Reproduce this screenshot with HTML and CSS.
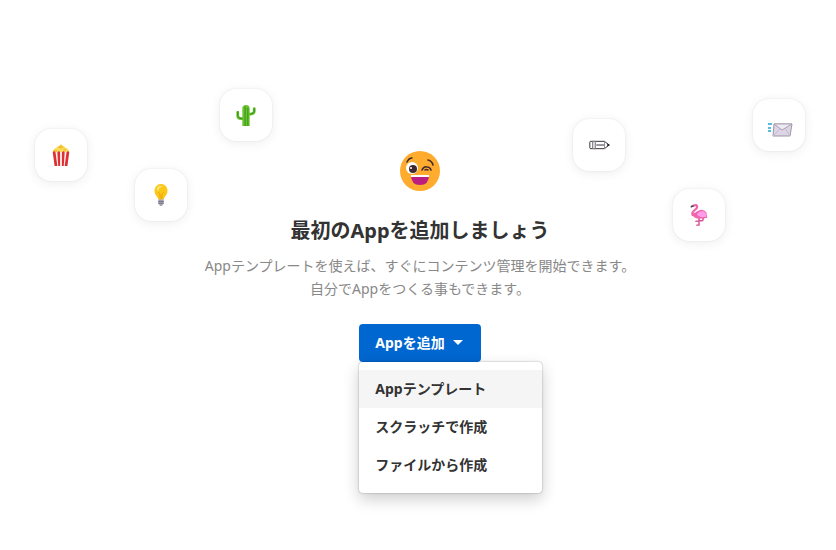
FILE: index.html
```
<!DOCTYPE html>
<html lang="ja">
<head>
    <meta charset="UTF-8">
    <meta name="viewport" content="width=device-width, initial-scale=1.0">
    <title>Appを追加</title>
    <link rel="stylesheet" href="styles.css">
</head>
<body>
    <main class="welcome">
        <div class="tiles" aria-hidden="true">
            <div class="tile tile-popcorn">
                <svg viewBox="0 0 24 24">
                    <path fill="#f9dc5c" d="M3 9c0-2 1-4 4-5q2-2 3-2 2-3 4 0 1 0 3 2c3 1 4 3 4 5z"/>
                    <path fill="#f5bd35" d="M8 4l4-3 3 3-3 1zM14 5l4 1-2 2zM5 6l3 1-1 2H4z"/>
                    <path fill="#fff0ed" d="M4 9h16l-2 14H6z"/>
                    <path fill="#dd3034" d="M3 9q1-2 3 0l2 15H5zM8 9q2-2 3 0v15H9zM13 9q2-2 3 0l-1 15h-2zM18 9q2-2 3 0l-2 15h-3z"/>
                </svg>
            </div>
            <div class="tile tile-bulb">
                <svg viewBox="0 0 24 24">
                    <path fill="#fbc719" d="M12 0a7 7 0 0 0-7 8c0 4 3 5 4 9h6c1-4 4-5 4-9a7 7 0 0 0-7-8z"/>
                    <path fill="#ffe36b" d="M8 3q3-2 6 0-4 0-5 5-3-2-1-5z"/>
                    <path fill="none" stroke="#eaa00f" d="M9 9l2 2v6m4-8l-2 2v6"/>
                    <path fill="#a6a5b5" d="M9 17h6v4l-2 3h-2l-2-3z"/>
                    <path stroke="#737285" d="M9 19h6m-6 2h6"/>
                </svg>
            </div>
            <div class="tile tile-cactus">
                <svg viewBox="0 0 24 24">
                    <path fill="none" stroke="#62bd26" stroke-width="3" stroke-linecap="round" d="M3 9v4q0 3 4 3h4M21 5v3q0 3-4 3h-3"/>
                    <path fill="#6ac42b" d="M8 24V5q0-4 4-4t4 4v19z"/>
                    <path stroke="#318b20" d="M11 3v21m3-20v20"/>
                    <path fill="none" stroke="#318b20" d="M3 8v5q1 3 5 3m13-11v3q-1 2-4 3"/>
                </svg>
            </div>
            <div class="tile tile-pencil">
                <svg viewBox="0 0 24 24">
                    <path fill="#fff" stroke="#27232a" d="M3 8h15l5 4-5 4H3q-1 0-1-1V9q0-1 1-1z"/>
                    <path fill="#e4e2e4" stroke="#77737a" d="M5 8h3v8H5z"/>
                    <path fill="none" stroke="#27232a" d="M9 12h9"/>
                    <path fill="none" stroke="#8d898f" d="M18 8v8"/>
                    <path fill="#27232a" d="M21 10l3 2-3 2z"/>
                </svg>
            </div>
            <div class="tile tile-flamingo">
                <svg viewBox="0 0 24 24">
                    <path fill="none" stroke="#d64c91" stroke-width="1.5" d="M12 15v8H9M17 15l-1 3-8 1"/>
                    <path fill="none" stroke="#f066ad" stroke-width="2.5" stroke-linecap="round" d="M6 2q4-2 4 1 0 2-3 4-3 2-2 5"/>
                    <path fill="#f066ad" d="M4 9q3 2 6-1 6-4 10 1l1 6q-4 1-9 1-7 0-8-7z"/>
                    <path fill="#ff9bea" d="M10 11q2-4 7-3 3 1 3 6-4 1-7 0-3-1-3-3z"/>
                    <path fill="#4b4850" d="M6 1L3 2v2l3-1z"/>
                </svg>
            </div>
            <div class="tile tile-mail">
                <svg class="wide" viewBox="0 0 28 24">
                    <path stroke="#22a7d4" stroke-width="1.5" d="M3 11h4M3 15h3M3 18h3"/>
                    <path fill="#dcd5e6" stroke="#9e95a7" d="M9 11h18l-2 12H8z"/>
                    <path fill="#eeeaf3" stroke="#aaa0b3" d="M9 11l8 6 10-6z"/>
                    <path fill="none" stroke="#c5bccd" d="M8 23l7-7m10 7l-5-8"/>
                </svg>
            </div>
        </div>

        <svg class="face" viewBox="0 0 40 40" role="img" aria-label="ウインクする顔">
            <circle cx="20" cy="20" r="20" fill="#ffab2e"/>
            <circle cx="12" cy="17" r="6" fill="#fff"/>
            <circle cx="13" cy="18" r="4" fill="#402a32"/>
            <circle cx="11" cy="17" r="1" fill="#fff"/>
            <path fill="none" stroke="#402a32" stroke-width="1.6" stroke-linecap="round" d="M22 19q2-4 5-3 3 0 4 3M25 19q1-1 3 0M7 11q2-4 5-4M28 9q4 1 5 5"/>
            <path fill="#bb1d80" d="M11 24h18q0 10-9 10t-9-10z"/>
            <path fill="#fff" d="M11 24h18v2H11z"/>
        </svg>
        <h1>最初のAppを追加しましょう</h1>
        <p>Appテンプレートを使えば、すぐにコンテンツ管理を開始できます。<br>自分でAppをつくる事もできます。</p>

        <div class="dropdown">
            <button type="button" class="add-button" aria-haspopup="menu" aria-expanded="true">
                Appを追加
                <span class="caret"></span>
            </button>
            <div class="menu" role="menu">
                <button type="button" role="menuitem" class="active">Appテンプレート</button>
                <button type="button" role="menuitem">スクラッチで作成</button>
                <button type="button" role="menuitem">ファイルから作成</button>
            </div>
        </div>
    </main>
</body>
</html>
```
FILE: styles.css
```
* {
    box-sizing: border-box;
}
body {
    margin: 0;
    background: #fff;
    color: #333;
    font-family: "Noto Sans", "Noto Sans CJK JP", sans-serif;
    font-size: 14px;
}
.welcome {
    position: relative;
    min-height: 100vh;
    padding: 151px 16px 56px 20px;
    display: flex;
    flex-direction: column;
    align-items: center;
    text-align: center;
}

/* Floating icons around the message */
.tiles {
    position: absolute;
    inset: 0;
    pointer-events: none;
}
.tile {
    position: absolute;
    width: 52px;
    height: 52px;
    display: flex;
    align-items: center;
    justify-content: center;
    background: #fff;
    border-radius: 16px;
    box-shadow: 0 0 2px rgba(0, 0, 0, 0.1), 0 2px 12px rgba(0, 0, 0, 0.07);
}
.tile svg {
    width: 22px;
    height: 22px;
}
.tile .wide {
    width: 28px;
    height: 24px;
}
.tile-popcorn {
    top: 129px;
    left: 35px;
}
.tile-bulb {
    top: 169px;
    left: 135px;
}
.tile-cactus {
    top: 89px;
    left: 220px;
}
.tile-pencil {
    top: 119px;
    right: 211px;
}
.tile-flamingo {
    top: 189px;
    right: 111px;
}
.tile-mail {
    top: 99px;
    right: 31px;
}

.face {
    width: 40px;
    height: 40px;
}
h1 {
    margin: 25px 0 8px;
    font-size: 20px;
    line-height: 30px;
}
p {
    margin: 0 0 24px;
    color: #888;
    line-height: 23px;
}

.dropdown {
    position: relative;
}
.dropdown button {
    border: none;
    color: inherit;
    font: inherit;
    font-weight: bold;
    cursor: pointer;
}
.dropdown .add-button {
    display: flex;
    align-items: center;
    gap: 8px;
    height: 38px;
    padding: 0 18px 2px 16px;
    background: #0066d0;
    border-radius: 4px;
    color: #fff;
}
.caret {
    border: 5px solid transparent;
    border-top-color: #fff;
    border-bottom: none;
}
.menu {
    position: absolute;
    top: 100%;
    left: 0;
    width: 183px;
    padding: 8px 0 9px;
    background: #fff;
    border-radius: 4px;
    box-shadow: 0 0 2px rgba(0, 0, 0, 0.35), 0 6px 16px rgba(0, 0, 0, 0.2);
}
.menu button {
    display: block;
    width: 100%;
    height: 38px;
    padding: 0 16px 2px;
    background: none;
    text-align: left;
}
.menu .active {
    background: #f5f5f5;
}
```
